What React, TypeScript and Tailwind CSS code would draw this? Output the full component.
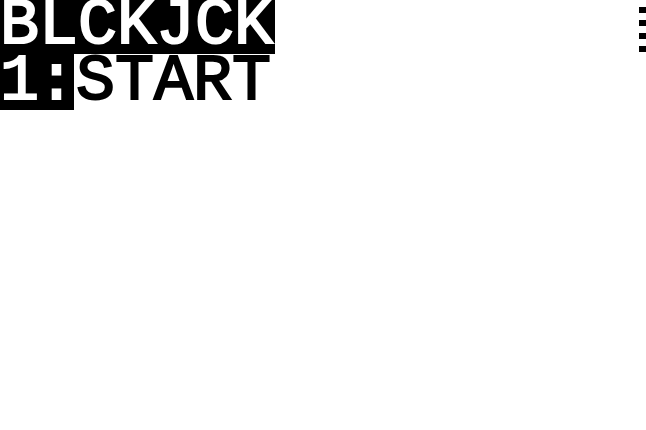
export default function App() {
    return (
        <div className="relative w-[646px] h-[430px] overflow-hidden bg-white text-black" style={{ fontFamily: '"Liberation Mono", "DejaVu Sans Mono", monospace' }}>
            {/* home screen rows */}
            <div className="flex flex-col text-[65px] leading-[56px] font-normal uppercase [-webkit-text-stroke:2px_currentColor]">
                <div className="flex -mt-[2px]">
                    <span className="bg-black text-white pr-[2px]">BLCKJCK</span>
                </div>
                <div className="flex">
                    <span className="bg-black text-white w-[74px] tracking-[-2px]">1:</span>
                    <span className="ml-[2px]">START</span>
                </div>
            </div>

            {/* busy indicator */}
            <div className="absolute top-[7px] right-0 flex flex-col gap-[7px]">
                <div className="w-[7px] h-[6px] bg-black" />
                <div className="w-[7px] h-[6px] bg-black" />
                <div className="w-[7px] h-[6px] bg-black" />
                <div className="w-[7px] h-[6px] bg-black" />
            </div>
        </div>
    )
}
